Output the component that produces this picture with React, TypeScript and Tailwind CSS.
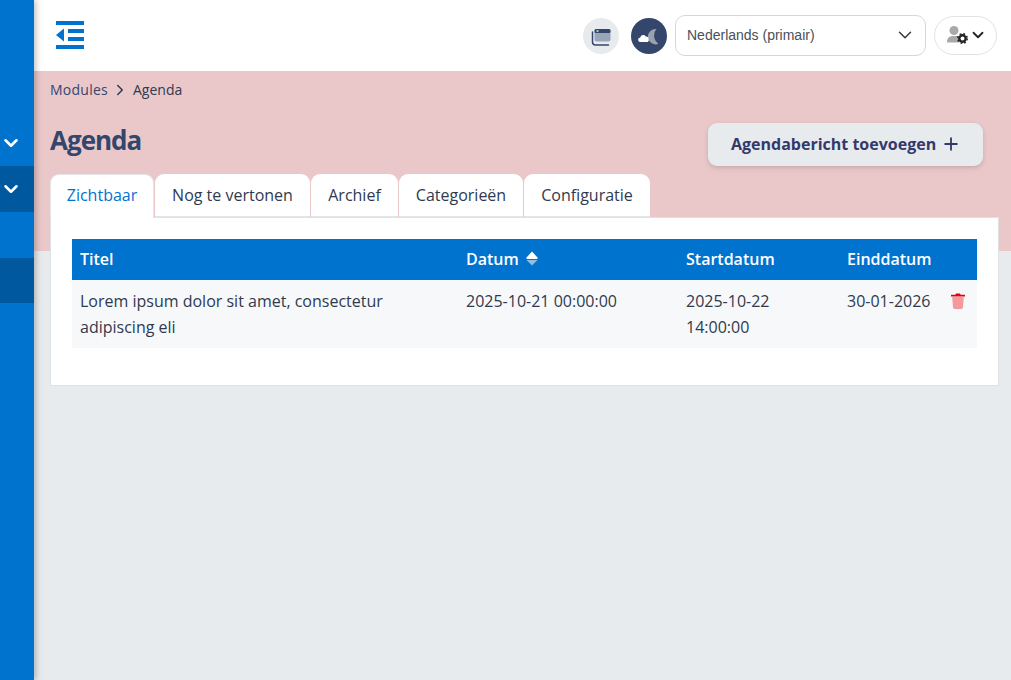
import { ChevronDown, ChevronRight, Plus } from "lucide-react";

const tabs = [
  { label: "Zichtbaar", w: "w-[104px]" },
  { label: "Nog te vertonen", w: "w-[155px]" },
  { label: "Archief", w: "w-[87px]" },
  { label: "Categorieën", w: "w-[124px]" },
  { label: "Configuratie", w: "w-[126px]" },
];

function MenuIcon() {
  return (
    <svg width="28" height="28" viewBox="0 0 28 28" fill="#0073cf" className="mb-[1px]">
      <rect x="0" y="0" width="28" height="4" />
      <rect x="12" y="8" width="16" height="4" />
      <rect x="12" y="16" width="16" height="4" />
      <rect x="0" y="24" width="28" height="4" />
      <path d="M8 7.500v13L0 14z" />
    </svg>
  );
}

function WindowIcon() {
  return (
    <svg width="20" height="20" viewBox="0 0 20 20">
      <rect x="3.500" y="3" width="16" height="12.500" rx="2" fill="#9aa5ba" />
      <rect x="3.500" y="3" width="16" height="4" rx="1.500" fill="#34466b" />
      <rect x="5.500" y="4.300" width="2" height="1.400" fill="#e8ebee" />
      <path d="M1.500 6v10A3 3 0 0 0 4.500 19h13" fill="none" stroke="#34466b" strokeWidth="1.500" strokeLinecap="round" />
    </svg>
  );
}

function MoonCloudIcon() {
  return (
    <svg width="22" height="20" viewBox="0 0 22 20">
      <path d="M18.500 3a7.700 7.700 0 1 0 2 14.800A10 10 0 0 1 18.500 3z" fill="#9aa0ad" />
      <path d="M2.500 16a2.300 2.300 0 0 1-.2-4.600 3 3 0 0 1 5.500-1 2.600 2.600 0 0 1 2.900 2.800 2.400 2.400 0 0 1-.9 2.800z" fill="#ffffff" />
    </svg>
  );
}

function UserCogIcon() {
  return (
    <svg width="22" height="18" viewBox="0 0 22 18">
      <circle cx="7" cy="4.500" r="4.500" fill="#a9a9a9" />
      <path d="M0 16c0-4 2.500-6 6-6h3c1.500 0 2.500.4 3.500 1V16.500H0.500z" fill="#a9a9a9" />
      <circle cx="15.500" cy="12.500" r="3.200" fill="none" stroke="#222222" strokeWidth="2.400" />
      <circle cx="15.500" cy="12.500" r="4.800" fill="none" stroke="#222222" strokeWidth="1.400" strokeDasharray="1.900 1.900" />
    </svg>
  );
}

function SortIcon() {
  return (
    <svg width="12" height="15" viewBox="0 0 12 15" fill="#ffffff">
      <path d="M6 .5 11.500 6.500Q12 8 10.500 8H1.500Q0 8 .5 6.500z" />
      <path d="M.5 9H11.500L6 14.500z" opacity="0.550" />
    </svg>
  );
}

function TrashIcon() {
  return (
    <svg width="14" height="16" viewBox="0 0 14 16">
      <path d="M1.200 4h11.600l-.8 10.600A1.500 1.500 0 0 1 10.500 16h-7A1.500 1.500 0 0 1 2 14.600z" fill="#f49a9c" />
      <path d="M0 1.700h4.400L5 .5h4l.6 1.200H14v1.700H0z" fill="#e3000f" />
    </svg>
  );
}

export default function App() {
  return (
    <div className="flex h-[680px] w-[1011px] overflow-hidden bg-[#e8ebee] font-['Open_Sans',sans-serif] text-base text-[#2f3a4f]">
      <aside className="z-10 flex w-[34px] shrink-0 flex-col bg-[#0073cf] pt-[120px] text-white shadow-[2px_0_6px_rgba(0,0,0,0.25)]">
        <div className="flex h-[46px] items-center">
          <ChevronDown size={22} strokeWidth={2.800} />
        </div>
        <div className="flex h-[46px] items-center bg-[#00589f]">
          <ChevronDown size={22} strokeWidth={2.800} />
        </div>
        <div className="h-[46px]" />
        <div className="h-[45px] bg-[#00589f]" />
      </aside>

      <div className="flex min-w-0 flex-1 flex-col">
        <header className="flex h-[71px] shrink-0 items-center bg-white pl-[22px] pr-[14px]">
          <MenuIcon />
          <div className="ml-auto flex items-center">
            <div className="flex h-9 w-9 items-center justify-center rounded-full bg-[#e8ebee]">
              <WindowIcon />
            </div>
            <div className="ml-[12px] flex h-9 w-9 items-center justify-center rounded-full bg-[#34466b]">
              <MoonCloudIcon />
            </div>
            <div className="ml-[8px] flex h-[41px] w-[251px] items-center justify-between rounded-[10px] border border-[#d5d7da] bg-white pb-[1px] pl-[11px] pr-[9px] font-['Liberation_Sans',sans-serif] text-sm text-[#495057]">
              <span>Nederlands (primair)</span>
              <ChevronDown size={22} strokeWidth={1.600} className="text-[#343a40]" />
            </div>
            <div className="ml-[8px] flex h-[39px] w-[63px] items-center rounded-full border border-[#e0e3e6] bg-white pb-[1px] pl-[12px]">
              <UserCogIcon />
              <ChevronDown size={18} strokeWidth={2.400} className="text-[#222222]" />
            </div>
          </div>
        </header>

        <main className="h-[180px] shrink-0 bg-[#eac8ca] pl-[16px] pr-[12px]">
          <nav className="flex h-[37px] items-center text-sm">
            <span className="font-medium tracking-[0.25px] text-[#34466b]">Modules</span>
            <ChevronRight size={18} strokeWidth={2} className="ml-[3px] mr-[4px] text-[#2f3a4f]" />
            <span>Agenda</span>
          </nav>

          <div className="mt-[15px] flex items-start justify-between pr-[16px]">
            <h1 className="text-[26px] leading-[34px] font-bold tracking-[-1px] text-[#34466b]">Agenda</h1>
            <button className="flex h-[43px] w-[275px] items-center gap-[5px] rounded-[9px] bg-[#e8ebee] pb-[1px] pl-[23px] font-bold text-[#34396b] shadow-[0_2px_5px_rgba(0,0,0,0.15)]">
              Agendabericht toevoegen
              <Plus size={20} strokeWidth={2.200} />
            </button>
          </div>

          <div className="mt-[8px] flex h-[43px] gap-[1px]">
            {tabs.map((t, i) => (
              <div
                key={t.label}
                className={`${t.w} flex items-center justify-center rounded-t-[9px] bg-white ${i === 0 ? "relative z-10 h-[44px] border border-b-0 border-[#e3e5e8] pb-[3px] text-[#0073cf]" : "pb-[2px] shadow-[inset_0_-1px_0_#e3e5e8]"}`}
              >
                {t.label}
              </div>
            ))}
          </div>

          <section className="h-[169px] border border-[#dfe2e5] bg-white px-[21px] pt-[21px]">
            <table className="w-[905px] table-fixed border-collapse">
              <colgroup>
                <col className="w-[386px]" />
                <col className="w-[220px]" />
                <col className="w-[161px]" />
                <col className="w-[138px]" />
              </colgroup>
              <thead>
                <tr className="h-[41px] bg-[#0073cf] text-left text-white">
                  <th className="px-2 pb-[2px] font-semibold">Titel</th>
                  <th className="px-2 pb-[2px] font-semibold">
                    <span className="flex items-center gap-[7px]">
                      Datum <SortIcon />
                    </span>
                  </th>
                  <th className="px-2 pb-[2px] font-semibold">Startdatum</th>
                  <th className="px-2 pb-[2px] font-semibold">Einddatum</th>
                </tr>
              </thead>
              <tbody>
                <tr className="h-[68px] bg-[#f7f8fa] align-top leading-[26px]">
                  <td className="px-2 pt-[8px]">Lorem ipsum dolor sit amet, consectetur adipiscing eli</td>
                  <td className="px-2 pt-[8px]">2025-10-21 00:00:00</td>
                  <td className="px-2 pt-[8px]">2025-10-22 14:00:00</td>
                  <td className="px-2 pt-[8px]">
                    <div className="flex items-start justify-between pr-[4px]">
                      <span>30-01-2026</span>
                      <span className="mt-[5px]">
                        <TrashIcon />
                      </span>
                    </div>
                  </td>
                </tr>
              </tbody>
            </table>
          </section>
        </main>
      </div>
    </div>
  );
}
